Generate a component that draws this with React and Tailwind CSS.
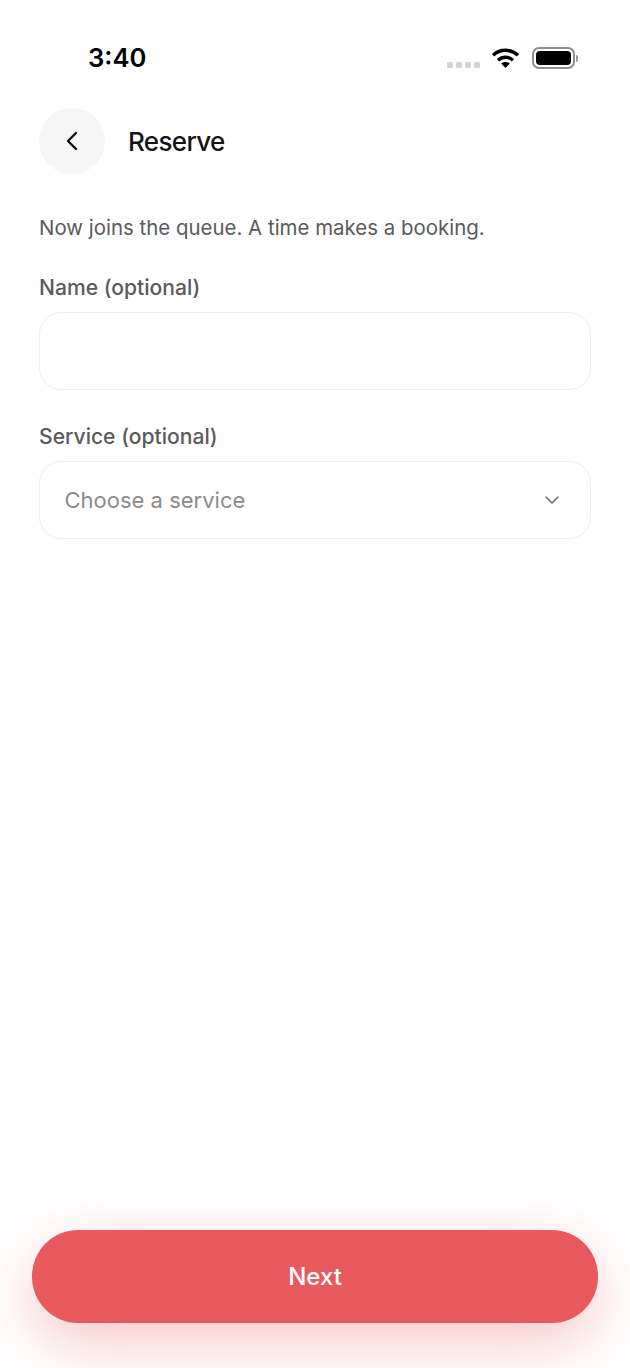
import { ChevronLeft, ChevronDown } from 'lucide-react';

function StatusBar() {
  return (
    <div className="flex items-center justify-between h-[116px] pl-[88px] pr-[52px]">
      <span className="text-[25.6px] font-semibold text-black leading-none">3:40</span>
      <div className="flex items-center">
        <div className="flex gap-[3px] mr-[11px] mt-[14px]">
          <span className="w-[6px] h-[6px] rounded-[1.5px] bg-[#d2d2d2]"></span>
          <span className="w-[6px] h-[6px] rounded-[1.5px] bg-[#d2d2d2]"></span>
          <span className="w-[6px] h-[6px] rounded-[1.5px] bg-[#d2d2d2]"></span>
          <span className="w-[6px] h-[6px] rounded-[1.5px] bg-[#d2d2d2]"></span>
        </div>
        <svg width="29" height="22" viewBox="0 0 29 22" fill="none" className="mr-[12px]">
          <path d="M2 8.2C9.2 1.6 19.8 1.6 27 8.2" stroke="#000" strokeWidth="3.4" />
          <path d="M7 13.2C11.5 9.2 17.5 9.2 22 13.2" stroke="#000" strokeWidth="3.4" />
          <path d="M10.2 16.6L14.5 21L18.8 16.6C16.3 14.6 12.7 14.6 10.2 16.6Z" fill="#000" />
        </svg>
        <div className="flex items-center">
          <div className="w-[43px] h-[22px] rounded-[7px] border-2 border-[#8f8f8f] p-[2px]">
            <div className="w-full h-full rounded-[4px] bg-black"></div>
          </div>
          <div className="w-[2px] h-[7px] ml-[1px] rounded-r-[2px] bg-[#9a9a9a]"></div>
        </div>
      </div>
    </div>
  );
}

function Label({ children }) {
  return <label className="block text-[21.1px] leading-[26px] font-[550] text-[#5a5a5a]">{children}</label>;
}

export default function App() {
  return (
    <div className="w-[630px] h-[1368px] bg-white flex flex-col overflow-hidden font-['Inter',sans-serif]">
      <StatusBar />

      {/* Header */}
      <div className="flex items-center px-[39px] h-[66px] mt-[-8px]">
        <button className="w-[66px] h-[66px] rounded-full bg-[#f6f6f6] flex items-center justify-center">
          <ChevronLeft size={32} strokeWidth={1.8} color="#111111" />
        </button>
        <h1 className="ml-[23px] text-[26px] font-[550] tracking-[-0.65px] text-[#141414]">Reserve</h1>
      </div>

      <div className="flex-1 px-[39px]">
        <p className="mt-[41px] text-[20.45px] leading-[26px] text-[#5a5a5a]">
          Now joins the queue. A time makes a booking.
        </p>

        <div className="mt-[34px]">
          <Label>Name (optional)</Label>
          <input className="mt-[11px] block w-full h-[78px] rounded-[22px] border-[1.5px] border-[#efefef] bg-white" />
        </div>

        <div className="mt-[34px]">
          <Label>Service (optional)</Label>
          <div className="mt-[11px] flex items-center justify-between h-[78px] rounded-[22px] border-[1.5px] border-[#efefef] bg-white pl-[24.5px] pr-[26.5px]">
            <span className="text-[22px] text-[#8c8c8c]">Choose a service</span>
            <ChevronDown size={24} strokeWidth={1.6} color="#6e6e6e" />
          </div>
        </div>
      </div>

      {/* Footer */}
      <div className="px-[32px] pb-[45px]">
        <button className="w-full h-[93px] rounded-[46px] bg-[#e95a5e] text-white text-[24px] font-medium shadow-[0_20px_60px_rgba(233,90,94,0.34)]">
          Next
        </button>
      </div>
    </div>
  );
}
